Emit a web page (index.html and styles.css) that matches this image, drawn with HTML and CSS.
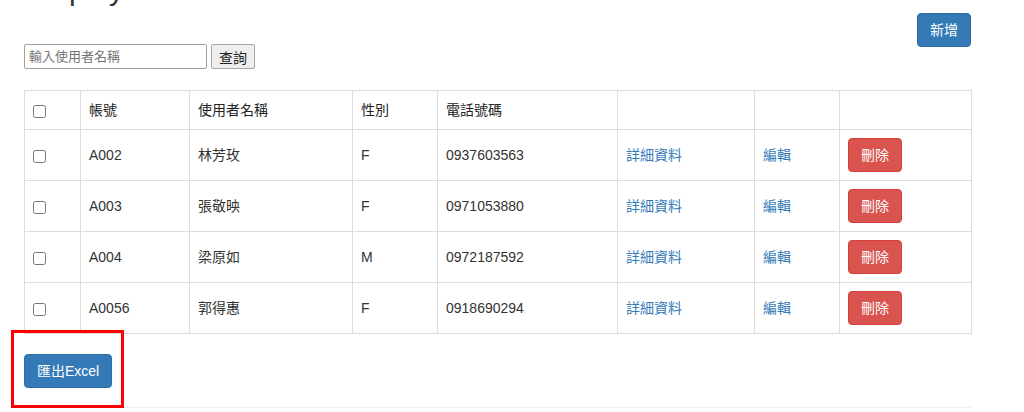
FILE: index.html
```html
<!DOCTYPE html>
<html lang="zh-Hant">
<head>
    <meta charset="UTF-8">
    <meta name="viewport" content="width=device-width, initial-scale=1.0">
    <title>Employee</title>
    <link rel="stylesheet" href="styles.css">
</head>
<body>
    <div class="container">
        <h2 class="page-title">Employee</h2>
        <div class="toolbar">
            <form class="search-form" onsubmit="return false;">
                <input type="text" class="search-input" placeholder="輸入使用者名稱">
                <button type="submit" class="search-btn">查詢</button>
            </form>
            <button type="button" class="btn btn-primary">新增</button>
        </div>

        <table class="table">
            <colgroup>
                <col class="col-check">
                <col class="col-id">
                <col class="col-name">
                <col class="col-sex">
                <col class="col-phone">
                <col class="col-detail">
                <col class="col-edit">
                <col class="col-del">
            </colgroup>
            <thead>
                <tr>
                    <th><input type="checkbox"></th>
                    <th>帳號</th>
                    <th>使用者名稱</th>
                    <th>性別</th>
                    <th>電話號碼</th>
                    <th></th>
                    <th></th>
                    <th></th>
                </tr>
            </thead>
            <tbody>
                <tr>
                    <td><input type="checkbox"></td>
                    <td>A002</td>
                    <td>林芳玫</td>
                    <td>F</td>
                    <td>0937603563</td>
                    <td><a href="#">詳細資料</a></td>
                    <td><a href="#">編輯</a></td>
                    <td><button type="button" class="btn btn-danger">刪除</button></td>
                </tr>
                <tr>
                    <td><input type="checkbox"></td>
                    <td>A003</td>
                    <td>張敬映</td>
                    <td>F</td>
                    <td>0971053880</td>
                    <td><a href="#">詳細資料</a></td>
                    <td><a href="#">編輯</a></td>
                    <td><button type="button" class="btn btn-danger">刪除</button></td>
                </tr>
                <tr>
                    <td><input type="checkbox"></td>
                    <td>A004</td>
                    <td>梁原如</td>
                    <td>M</td>
                    <td>0972187592</td>
                    <td><a href="#">詳細資料</a></td>
                    <td><a href="#">編輯</a></td>
                    <td><button type="button" class="btn btn-danger">刪除</button></td>
                </tr>
                <tr>
                    <td><input type="checkbox"></td>
                    <td>A0056</td>
                    <td>郭得惠</td>
                    <td>F</td>
                    <td>0918690294</td>
                    <td><a href="#">詳細資料</a></td>
                    <td><a href="#">編輯</a></td>
                    <td><button type="button" class="btn btn-danger">刪除</button></td>
                </tr>
            </tbody>
        </table>

        <div class="export-wrap">
            <button type="button" class="btn btn-primary">匯出Excel</button>
            <span class="highlight"></span>
        </div>

        <hr class="divider">
    </div>
</body>
</html>
```

FILE: styles.css
```css
body {
    margin: 0;
    font-family: "Liberation Sans", "Noto Sans CJK TC", sans-serif;
    font-size: 14px;
    line-height: 20px;
    color: #333;
    background: #fff;
}
.container {
    width: 947px;
    margin-left: 24px;
}
.page-title {
    margin: -27px 0 0;
    font-size: 30px;
    line-height: 33px;
    font-weight: 500;
    color: #333;
}
.toolbar {
    display: flex;
    justify-content: space-between;
    align-items: flex-start;
    margin-top: 7px;
}
.search-form {
    display: flex;
    gap: 4px;
    margin-top: 31px;
}
.search-input {
    box-sizing: border-box;
    width: 183px;
    height: 25px;
    padding: 1px 4px;
    border: 1px solid #a0a0a0;
    border-radius: 2px;
    font-family: "Liberation Sans", "Noto Sans CJK TC", sans-serif;
    font-size: 13px;
    color: #333;
}
.search-input::placeholder {
    color: #757575;
}
.search-btn {
    box-sizing: border-box;
    width: 44px;
    height: 25px;
    padding: 0;
    border: 1px solid #a6a6a6;
    border-radius: 2px;
    background: #eee;
    font-family: "Liberation Sans", "Noto Sans CJK TC", sans-serif;
    font-size: 14px;
    color: #222;
}
.btn {
    box-sizing: border-box;
    height: 34px;
    padding: 6px 12px;
    border: 1px solid transparent;
    border-radius: 4px;
    font-family: "Liberation Sans", "Noto Sans CJK TC", sans-serif;
    font-size: 14px;
    line-height: 20px;
    color: #fff;
    cursor: pointer;
}
.btn-primary {
    background-color: #337ab7;
    border-color: #2e6da4;
}
.btn-danger {
    background-color: #d9534f;
    border-color: #d43f3a;
}
.table {
    width: 947px;
    margin-top: 21px;
    border-collapse: collapse;
    table-layout: fixed;
}
.col-check { width: 56px; }
.col-id { width: 109px; }
.col-name { width: 163px; }
.col-sex { width: 85px; }
.col-phone { width: 180px; }
.col-detail { width: 137px; }
.col-edit { width: 85px; }
.col-del { width: 132px; }
.table th, .table td {
    border: 1px solid #ddd;
    padding: 8px;
    text-align: left;
    vertical-align: middle;
}
.table th {
    padding: 9px 8px;
    font-weight: normal;
    color: #222;
}
.table td .btn {
    vertical-align: top;
}
.table input[type="checkbox"] {
    width: 13px;
    height: 13px;
    margin: 0;
    vertical-align: middle;
}
.table a {
    color: #337ab7;
    text-decoration: none;
}
.export-wrap {
    position: relative;
    margin-top: 20px;
    width: 89px;
}
.highlight {
    position: absolute;
    left: -13px;
    top: -24px;
    width: 113px;
    height: 78px;
    box-sizing: border-box;
    border: 3px solid #f00;
}
.divider {
    margin: 19px 0 0;
    border: 0;
    border-top: 1px solid #eee;
}
```
